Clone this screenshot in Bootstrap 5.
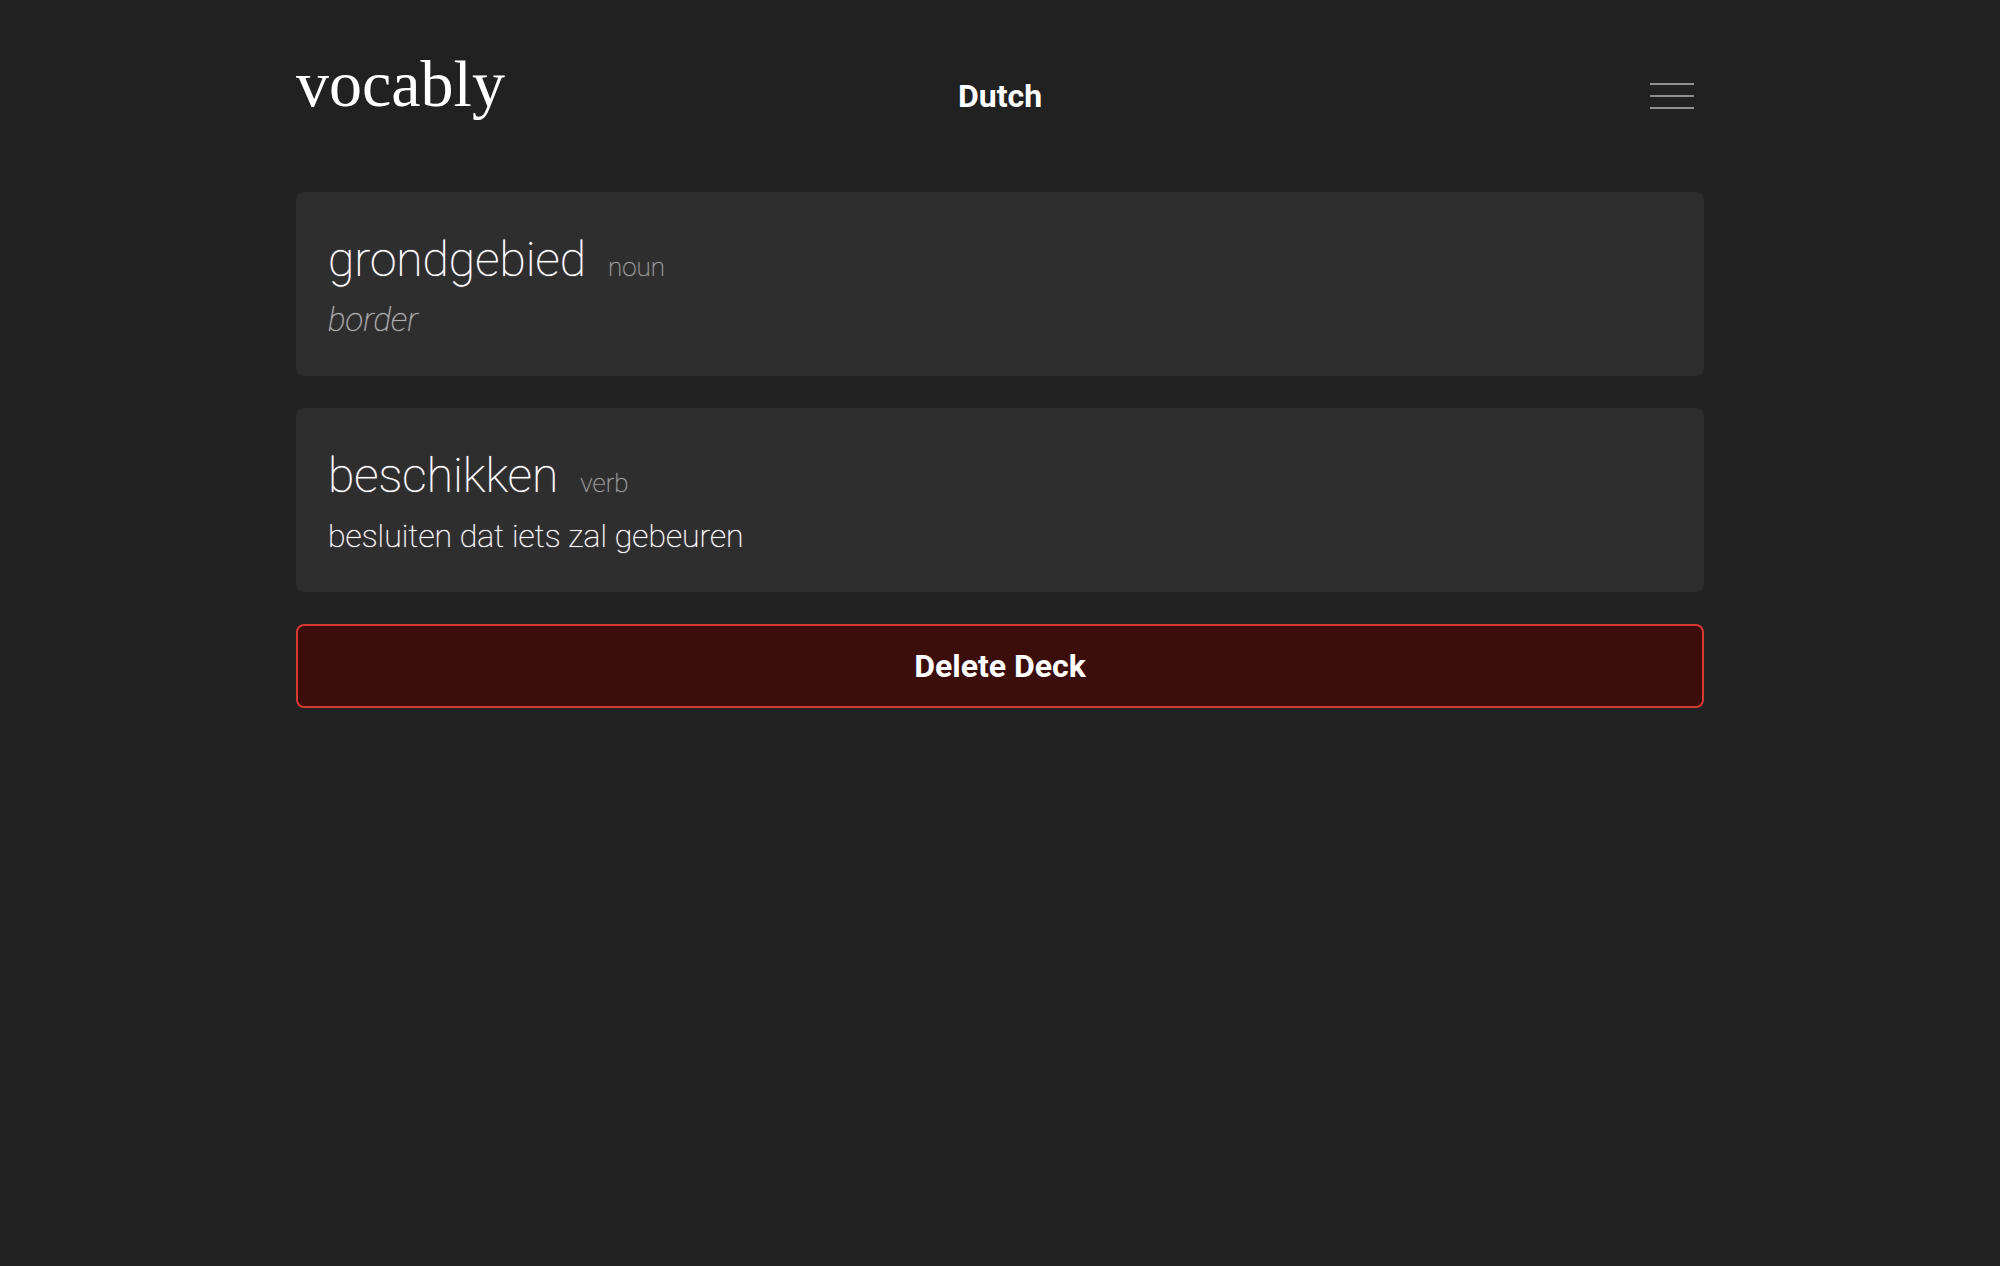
<!DOCTYPE html>
<html lang="en">
<head>
<meta charset="utf-8">
<meta name="viewport" content="width=device-width, initial-scale=1">
<title>Vocably</title>
<link href="https://cdn.jsdelivr.net/npm/bootstrap@5.3.0/dist/css/bootstrap.min.css" rel="stylesheet">
<style>
  body { background: #212121; color: #fff; font-family: Roboto, sans-serif; font-size: 32px; }
  .shell { max-width: 1472px; padding: 0 32px; }
  .topbar { height: 192px; }
  .brand { font-family: "Liberation Serif", serif; font-size: 66px; line-height: 80px; color: #fff; padding-bottom: 24px; }
  .deck-title { font-size: 32px; font-weight: 700; line-height: 40px; }
  .menu-btn { padding: 10px; border: 0; background: none; display: block; }
  .menu-btn svg { display: block; }
  .deck { gap: 32px; }
  .word-card { background: #2e2e2e; border: 0; border-radius: 8px; padding: 32px; font-weight: 100; text-shadow: 0 0 1px currentColor; }
  .word-line { gap: 22px; }
  .word { font-size: 48px; font-weight: 100; line-height: 72px; }
  .speech { font-size: 26px; color: #a0a0a0; }
  .meaning { font-size: 32px; line-height: 48px; }
  .translation { font-size: 33px; color: #b0b0b0; }
  .delete-btn { --bs-btn-color: #fff; --bs-btn-bg: #3b0e0b; --bs-btn-border-color: #d33a33; --bs-btn-hover-color: #fff; --bs-btn-hover-bg: #521410; --bs-btn-hover-border-color: #d33a33;
    border-width: 2px; border-radius: 8px; font-size: 32px; font-weight: 700; line-height: 40px; padding: 20px; }
</style>
</head>
<body>
<div class="container-fluid shell">
  <header class="topbar row g-0 align-items-center">
    <div class="col"><a href="#" class="brand d-inline-block text-decoration-none">vocably</a></div>
    <h1 class="deck-title col-auto m-0">Dutch</h1>
    <div class="col d-flex justify-content-end">
      <button type="button" class="menu-btn" aria-label="Menu">
        <svg width="44" height="26" viewBox="0 0 44 26" fill="#909090"><path d="M0 0h44v2H0zM0 12h44v2H0zM0 24h44v2H0z"/></svg>
      </button>
    </div>
  </header>
  <main class="deck d-flex flex-column">
    <article class="card word-card text-white">
      <div class="word-line d-flex align-items-baseline"><h2 class="word m-0">grondgebied</h2><span class="speech">noun</span></div>
      <p class="meaning translation fst-italic m-0">border</p>
    </article>
    <article class="card word-card text-white">
      <div class="word-line d-flex align-items-baseline"><h2 class="word m-0">beschikken</h2><span class="speech">verb</span></div>
      <p class="meaning m-0">besluiten dat iets zal gebeuren</p>
    </article>
    <button type="button" class="btn delete-btn">Delete Deck</button>
  </main>
</div>
<script src="https://cdn.jsdelivr.net/npm/bootstrap@5.3.0/dist/js/bootstrap.bundle.min.js"></script>
</body>
</html>
